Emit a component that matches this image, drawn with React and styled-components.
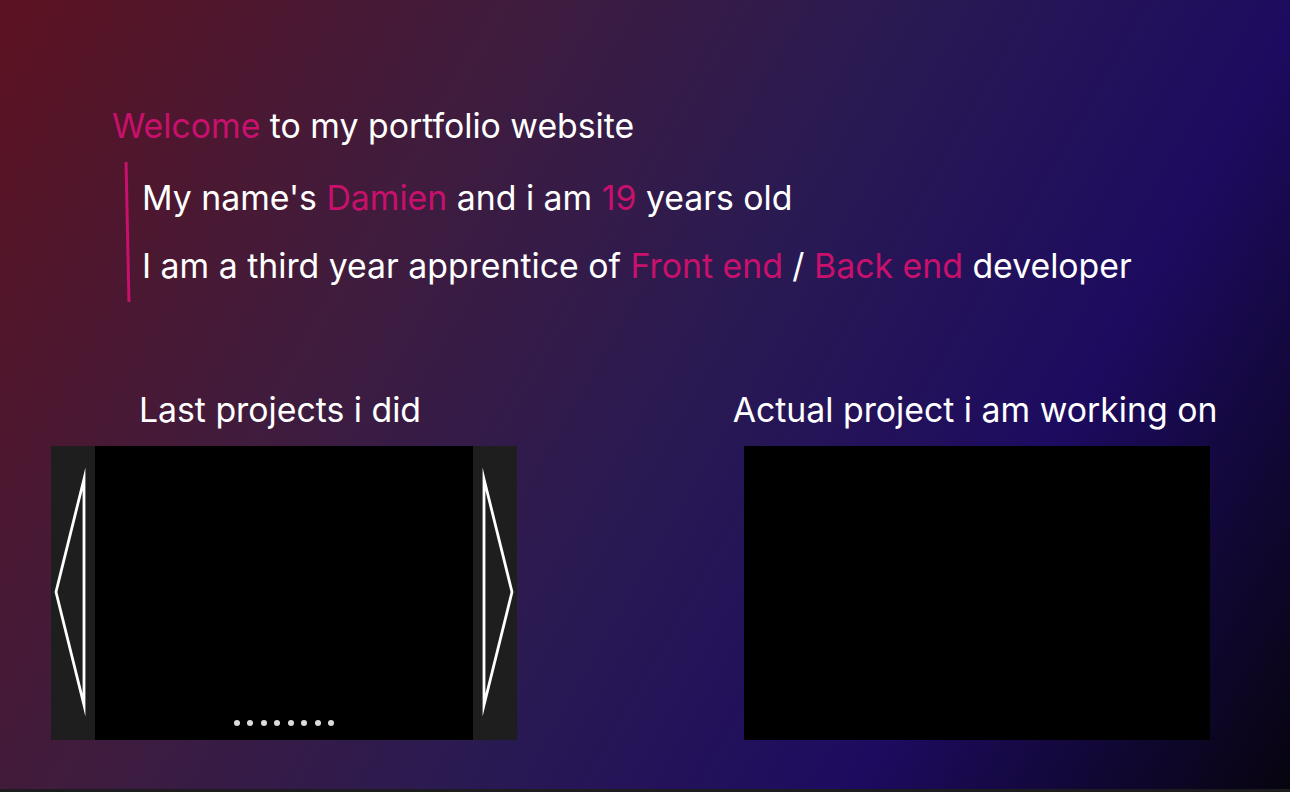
import React from "react";
import styled, { createGlobalStyle } from "styled-components";

const Global = createGlobalStyle`
  html, body { margin: 0; padding: 0; background: #1d1d1f; }
  body { font-family: Inter, "Noto Sans", sans-serif; }
  * { box-sizing: border-box; }
`;

const Page = styled.main`
  width: 1290px;
  height: 789px;
  overflow: hidden;
  background: linear-gradient(120deg, #5c1220 0%, #3f1c3e 30%, #2a1a52 52%, #1d0b60 75%, #07040f 100%);
  color: #ffffff;
  padding-top: 104px;
`;

const Intro = styled.section`
  padding-left: 112px;
`;

const Title = styled.h1`
  margin: 0;
  font-weight: 400;
  font-size: 33.8px;
  line-height: 44px;
`;

const Accent = styled.span`
  color: #c8106c;
`;

const Quote = styled.div`
  display: flex;
  margin-top: 14px;
  margin-left: 14px;
`;

const Bar = styled.div`
  width: 3px;
  height: 140px;
  background: #c8106c;
  transform: rotate(-1.2deg);
  flex: none;
`;

const Lines = styled.div`
  padding-left: 13px;
  padding-top: 14px;
  display: flex;
  flex-direction: column;
  gap: 24px;
`;

const Line = styled.p`
  margin: 0;
  font-size: 33.8px;
  line-height: 44px;
  font-weight: 400;
`;

const Projects = styled.section`
  display: flex;
  gap: 227px;
  padding-left: 51px;
  margin-top: 88px;
`;

const Column = styled.div`
  width: 466px;
  display: flex;
  flex-direction: column;
  align-items: center;
  gap: 16px;
`;

const Heading = styled.h2`
  margin: 0;
  font-weight: 400;
  font-size: 33.8px;
  line-height: 40px;
  text-align: center;
  white-space: nowrap;
  transform: translateX(${(p) => p.$shift || 0}px);
`;

const Frame = styled.div`
  width: 466px;
  height: 294px;
  background: #000;
  display: flex;
`;

const Side = styled.button`
  width: 44px;
  height: 100%;
  border: none;
  padding: 0;
  background: #1e1e1e;
  display: flex;
  align-items: center;
  justify-content: center;
  cursor: pointer;
`;

const Screen = styled.div`
  flex: 1;
  position: relative;
  background: #000;
`;

const Dots = styled.div`
  position: absolute;
  left: 0;
  right: 0;
  bottom: 14px;
  display: flex;
  justify-content: center;
  gap: 7.5px;
`;

const Dot = styled.span`
  width: 6px;
  height: 6px;
  border-radius: 50%;
  background: #dcdcdc;
`;

const Arrow = ({ dir }) => (
  <svg width="44" height="294" viewBox="0 0 44 294">
    {dir === "left" ? (
      <polygon points="33,33 5,146 33,259" fill="none" stroke="#fff" strokeWidth="2.8" strokeMiterlimit="20" />
    ) : (
      <polygon points="11,33 39,146 11,259" fill="none" stroke="#fff" strokeWidth="2.8" strokeMiterlimit="20" />
    )}
  </svg>
);

export default function App() {
  return (
    <>
      <Global />
      <Page>
        <Intro>
          <Title>
            <Accent>Welcome</Accent> to my portfolio website
          </Title>
          <Quote>
            <Bar />
            <Lines>
              <Line>
                My name's <Accent>Damien</Accent> and i am <Accent>19</Accent> years old
              </Line>
              <Line>
                I am a third year apprentice of <Accent>Front end</Accent> / <Accent>Back end</Accent> developer
              </Line>
            </Lines>
          </Quote>
        </Intro>
        <Projects>
          <Column>
            <Heading $shift={-4}>Last projects i did</Heading>
            <Frame>
              <Side aria-label="previous">
                <Arrow dir="left" />
              </Side>
              <Screen>
                <Dots>
                  {Array.from({ length: 8 }).map((_, i) => (
                    <Dot key={i} />
                  ))}
                </Dots>
              </Screen>
              <Side aria-label="next">
                <Arrow dir="right" />
              </Side>
            </Frame>
          </Column>
          <Column>
            <Heading $shift={-2}>Actual project i am working on</Heading>
            <Frame />
          </Column>
        </Projects>
      </Page>
    </>
  );
}
